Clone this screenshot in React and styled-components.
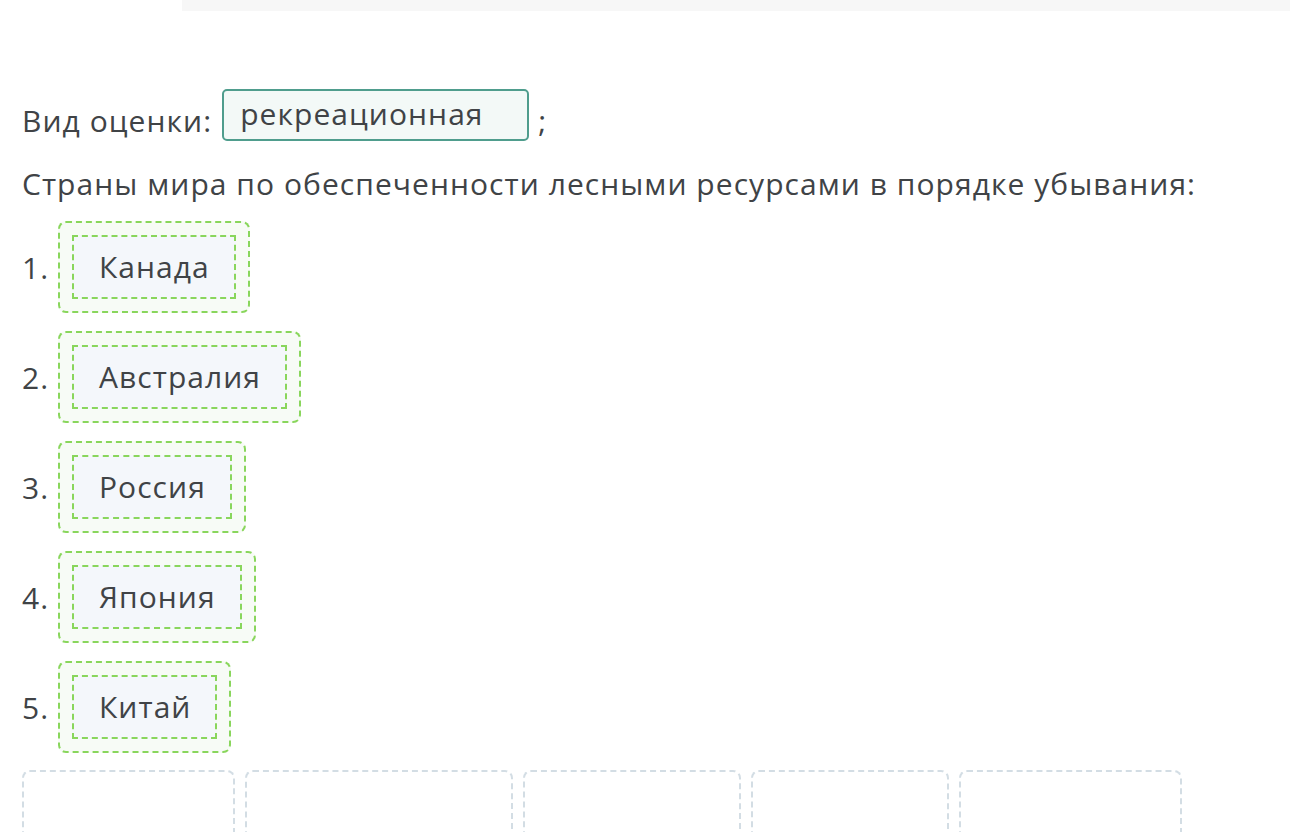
import React from "react";
import styled, { createGlobalStyle } from "styled-components";

const Global = createGlobalStyle`
  html, body { margin: 0; padding: 0; background: #ffffff; }
  body {
    font-family: "Open Sans", "Noto Sans", sans-serif;
    color: #404346;
  }
`;

const Page = styled.div`
  width: 1290px;
  height: 832px;
  overflow: hidden;
`;

const TopStrip = styled.div`
  margin-left: 182px;
  height: 11px;
  background: #f7f7f7;
`;

const Content = styled.div`
  padding: 78px 0 0 22px;
  font-size: 30px;
  letter-spacing: 1.05px;
`;

const AnswerLine = styled.div`
  display: flex;
  align-items: flex-end;
  height: 52px;
`;

const Label = styled.span`
  white-space: pre;
`;

const FilledSlot = styled.span`
  box-sizing: border-box;
  display: inline-flex;
  align-items: center;
  align-self: flex-start;
  width: 307px;
  height: 52px;
  margin-left: 10px;
  padding: 0 16px 3px;
  border: 2px solid #4f9d8d;
  border-radius: 5px;
  background: #f3f9f7;
`;

const Semi = styled.span`
  margin-left: 9px;
`;

const Prompt = styled.p`
  margin: 22px 0 17px;
`;

const List = styled.ol`
  list-style: none;
  margin: 0;
  padding: 0;
  display: flex;
  flex-direction: column;
  gap: 18px;
`;

const Item = styled.li`
  display: flex;
  align-items: center;
`;

const Num = styled.span`
  width: 36px;
`;

const DropZone = styled.div`
  box-sizing: border-box;
  height: 92px;
  padding: 12px;
  border: 2px dashed #89d65c;
  border-radius: 8px;
  background: #f7fbf6;
`;

const Chip = styled.div`
  box-sizing: border-box;
  height: 64px;
  padding: 0 24px 2px 25px;
  display: flex;
  align-items: center;
  border: 2px dashed #89d65c;
  background: #f4f7fb;
`;

const Bank = styled.div`
  display: flex;
  gap: 10px;
  margin-top: 17px;
`;

const EmptySlot = styled.div`
  box-sizing: border-box;
  width: ${(p) => p.$w}px;
  height: 110px;
  border: 2px dashed #d3dde4;
  border-radius: 8px;
`;

const countries = ["Канада", "Австралия", "Россия", "Япония", "Китай"];
const slots = [213, 268, 218, 198, 223];

export default function App() {
  return (
    <Page>
      <Global />
      <TopStrip />
      <Content>
        <AnswerLine>
          <Label>Вид оценки:</Label>
          <FilledSlot>рекреационная</FilledSlot>
          <Semi>;</Semi>
        </AnswerLine>
        <Prompt>Страны мира по обеспеченности лесными ресурсами в порядке убывания:</Prompt>
        <List>
          {countries.map((c, i) => (
            <Item key={c}>
              <Num>{i + 1}.</Num>
              <DropZone>
                <Chip>{c}</Chip>
              </DropZone>
            </Item>
          ))}
        </List>
        <Bank>
          {slots.map((w, i) => (
            <EmptySlot key={i} $w={w} />
          ))}
        </Bank>
      </Content>
    </Page>
  );
}
